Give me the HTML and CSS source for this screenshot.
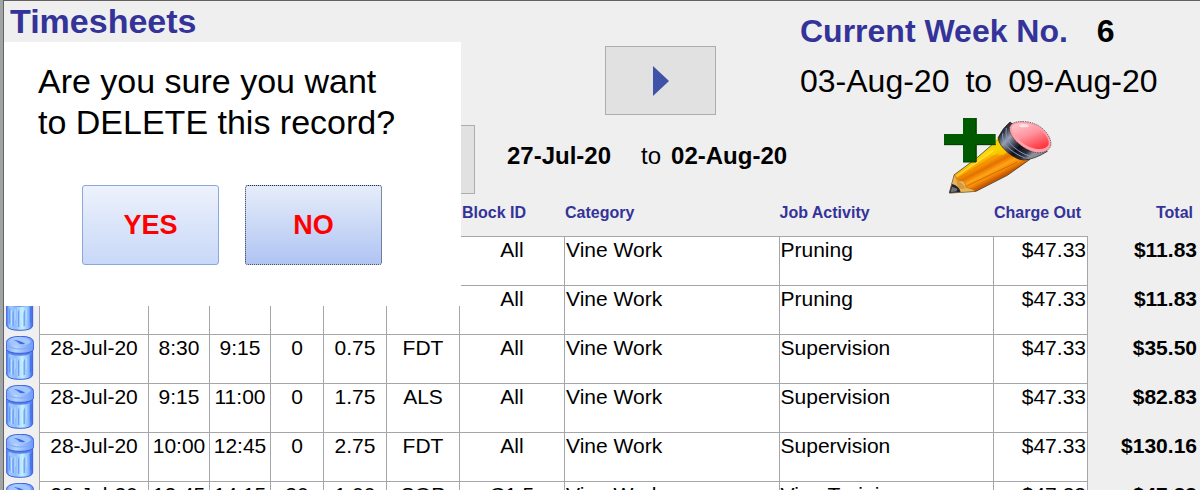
FILE: index.html
```
<!DOCTYPE html>
<html lang="en">
<head>
<meta charset="utf-8">
<title>Timesheets</title>
<link rel="stylesheet" href="styles.css">
</head>
<body>
<svg class="defs" aria-hidden="true">
  <defs>
    <linearGradient id="can" x1="0" x2="1" y1="0" y2="0">
      <stop offset="0" stop-color="#4f86f0"/><stop offset=".12" stop-color="#9cc8ff"/><stop offset=".35" stop-color="#90bcfc"/><stop offset=".6" stop-color="#c4f0ff"/><stop offset=".82" stop-color="#8fc0ff"/><stop offset="1" stop-color="#3a62e8"/>
    </linearGradient>
    <linearGradient id="lid" x1="0" x2="1" y1="0" y2="0">
      <stop offset="0" stop-color="#7fa6fa"/><stop offset=".35" stop-color="#b8d6ff"/><stop offset="1" stop-color="#6b96f8"/>
    </linearGradient>
    <linearGradient id="flute" x1="0" x2="1" y1="0" y2="0">
      <stop offset="0" stop-color="#5a86ee"/><stop offset=".5" stop-color="#8ab4fa"/><stop offset="1" stop-color="#d2f6ff"/>
    </linearGradient>
    <linearGradient id="wood" gradientUnits="userSpaceOnUse" x1="150" y1="150" x2="196" y2="238">
      <stop offset="0" stop-color="#e8c800"/><stop offset=".18" stop-color="#ffdc00"/><stop offset=".36" stop-color="#ffa800"/><stop offset=".56" stop-color="#e47000"/><stop offset=".72" stop-color="#ffa414"/><stop offset=".86" stop-color="#f48a08"/><stop offset="1" stop-color="#c85800"/>
    </linearGradient>
    <linearGradient id="metal" gradientUnits="userSpaceOnUse" x1="222" y1="95" x2="300" y2="170">
      <stop offset="0" stop-color="#30343c"/><stop offset=".22" stop-color="#9aa0b0"/><stop offset=".42" stop-color="#4a4e5c"/><stop offset=".6" stop-color="#101218"/><stop offset=".85" stop-color="#2c2e36"/><stop offset="1" stop-color="#8c8e98"/>
    </linearGradient>
    <linearGradient id="rubber" x1=".2" x2=".8" y1="0" y2="1">
      <stop offset="0" stop-color="#ffc4cc"/><stop offset=".45" stop-color="#ff929c"/><stop offset="1" stop-color="#ff3038"/>
    </linearGradient>
    <symbol id="bin" viewBox="18 138 84 132">
      <path d="M20 180V254Q24 268 60 268T98 254V180Z" fill="url(#can)" stroke="#3c62e0" stroke-width="3"/>
      <path d="M27 202Q33 205 35 210V255Q29 252 27 244Z" fill="url(#flute)"/>
      <path d="M38 254V217Q40 206 46 205V234Q43 242 43 256Z" fill="url(#flute)"/>
      <path d="M54 258V216Q55 206 61 205V238Q59 248 59 258Z" fill="url(#flute)"/>
      <path d="M71 256V216Q72 206 79 204V234Q77 244 77 254Z" fill="url(#flute)"/>
      <path d="M90 198V248L95 242V194Z" fill="#4a74ea"/>
      <path d="M22 190Q60 205 97 190V184H22Z" fill="#5880ea"/>
      <path d="M19 158Q20 140 60 139T101 158V178Q94 190 60 190T19 178Z" fill="url(#lid)" stroke="#3c62e0" stroke-width="3"/>
      <path d="M21 164Q35 178 62 177T99 163" fill="none" stroke="#7ea8fa" stroke-width="3"/>
      <path d="M26 156Q35 144 60 143T93 155Q82 167 60 167T26 156Z" fill="#a2c6ff"/>
      <path d="M41 151Q57 149 76 162Q59 164 55 158Q50 154 41 151Z" fill="#446ce0"/>
    </symbol>
  </defs>
</svg>

<main class="app">
  <header class="top">
    <h1 class="title">Timesheets</h1>

    <nav class="weeks" aria-label="Week">
      <button class="step next" type="button" aria-label="Next week">
        <svg class="arrow" viewBox="0 0 16 30" aria-hidden="true"><path d="M0 0V30L16 15Z" fill="#4052a8"/></svg>
      </button>
      <button class="step previous" type="button" aria-label="Previous week"></button>
      <p class="range"><b>27-Jul-20</b><span class="to">to</span><b>02-Aug-20</b></p>
    </nav>

    <section class="current">
      <h2 class="week">Current Week No. <span class="number">6</span></h2>
      <p class="dates"><span>03-Aug-20</span><span>to</span><span>09-Aug-20</span></p>
      <button class="add" type="button" aria-label="Add record">
        <svg class="pencil" viewBox="42 54 324 228" aria-hidden="true">
          <path d="M73 224L138 176L214 110L300 178L232 226L138 274L58 279Z" fill="url(#wood)" stroke="#222" stroke-width="2"/>
          <path d="M204 112L214 106L240 150L220 164L184 166Q176 152 204 112Z" fill="#f6d000" opacity=".75"/>
          <path d="M84 236L206 160" stroke="#c87800" stroke-width="2" opacity=".6"/>
          <path d="M110 258L262 186" stroke="#b85400" stroke-width="3" opacity=".6"/>
          <path d="M80 229L190 152" stroke="#fff060" stroke-width="4" opacity=".6"/>
          <path d="M73 224Q82 246 92 242Q106 240 108 262Q126 266 138 274L58 279Z" fill="#e8b458" stroke="#7a5010" stroke-width="1"/>
          <path d="M78 240Q98 246 106 266L86 266Z" fill="#d8983c"/>
          <path d="M66 252Q86 256 92 276L58 279Z" fill="#22242c"/>
          <path d="M66 260L82 266L80 274L62 277Z" fill="#70727c"/>
          <path d="M240 66Q218 84 205 112Q204 132 232 156T282 180Q314 178 352 154Z" fill="url(#metal)" stroke="#111" stroke-width="2"/>
          <path d="M229 84Q222 118 252 142T300 167M218 100Q214 128 240 148T284 173" fill="none" stroke="#8294c8" stroke-width="3"/>
          <path d="M240 78Q250 62 286 65T346 94Q366 118 362 138Q352 160 322 158T258 124Q234 98 240 78Z" fill="#ff9fac" stroke="#222" stroke-width="2" stroke-dasharray="4 3"/>
          <path d="M246 80Q256 66 288 70T342 98Q360 120 355 136Q346 150 316 146T262 114Q242 94 246 80Z" fill="url(#rubber)"/>
          <ellipse cx="282" cy="77" rx="14" ry="5" fill="#fff" opacity=".6"/>
          <path d="M99 54H140V102H197V135H140V186H99V135H42V102H99Z" fill="#005a00"/>
          <path d="M138 54V102M138 135V186H99M197 134H140M42 134H99" fill="none" stroke="#003c00" stroke-width="3"/>
        </svg>
      </button>
    </section>
  </header>

  <table class="records">
    <colgroup>
      <col class="c-bin"><col class="c-date"><col class="c-time"><col class="c-time"><col class="c-break"><col class="c-hours"><col class="c-staff"><col class="c-block"><col><col><col class="c-rate"><col class="c-total">
    </colgroup>
    <thead>
      <tr><td colspan="7"></td><th class="block" scope="col">Block ID</th><th scope="col">Category</th><th scope="col">Job Activity</th><th scope="col">Charge Out</th><th class="sum" scope="col">Total</th></tr>
    </thead>
    <tbody>
      <tr><td class="tool"><button class="delete" type="button" aria-label="Delete record"><svg class="bin" aria-hidden="true"><use href="#bin"/></svg></button></td><td></td><td></td><td></td><td></td><td></td><td></td><td>All</td><td class="text">Vine Work</td><td class="text">Pruning</td><td class="rate">$47.33</td><td class="total">$11.83</td></tr>
      <tr><td class="tool"><button class="delete" type="button" aria-label="Delete record"><svg class="bin" aria-hidden="true"><use href="#bin"/></svg></button></td><td></td><td></td><td></td><td></td><td></td><td></td><td>All</td><td class="text">Vine Work</td><td class="text">Pruning</td><td class="rate">$47.33</td><td class="total">$11.83</td></tr>
      <tr><td class="tool"><button class="delete" type="button" aria-label="Delete record"><svg class="bin" aria-hidden="true"><use href="#bin"/></svg></button></td><td>28-Jul-20</td><td>8:30</td><td>9:15</td><td>0</td><td>0.75</td><td>FDT</td><td>All</td><td class="text">Vine Work</td><td class="text">Supervision</td><td class="rate">$47.33</td><td class="total">$35.50</td></tr>
      <tr><td class="tool"><button class="delete" type="button" aria-label="Delete record"><svg class="bin" aria-hidden="true"><use href="#bin"/></svg></button></td><td>28-Jul-20</td><td>9:15</td><td>11:00</td><td>0</td><td>1.75</td><td>ALS</td><td>All</td><td class="text">Vine Work</td><td class="text">Supervision</td><td class="rate">$47.33</td><td class="total">$82.83</td></tr>
      <tr><td class="tool"><button class="delete" type="button" aria-label="Delete record"><svg class="bin" aria-hidden="true"><use href="#bin"/></svg></button></td><td>28-Jul-20</td><td>10:00</td><td>12:45</td><td>0</td><td>2.75</td><td>FDT</td><td>All</td><td class="text">Vine Work</td><td class="text">Supervision</td><td class="rate">$47.33</td><td class="total">$130.16</td></tr>
      <tr><td class="tool"><button class="delete" type="button" aria-label="Delete record"><svg class="bin" aria-hidden="true"><use href="#bin"/></svg></button></td><td>28-Jul-20</td><td>12:45</td><td>14:15</td><td>30</td><td>1.00</td><td>SOP</td><td>C1.5</td><td class="text">Vine Work</td><td class="text">Vine Training</td><td class="rate">$47.33</td><td class="total">$47.33</td></tr>
    </tbody>
  </table>

  <div class="dialog" role="alertdialog" aria-labelledby="question">
    <p class="question" id="question">Are you sure you want<br>to DELETE this record?</p>
    <div class="answers">
      <button class="answer" type="button">YES</button>
      <button class="answer chosen" type="button">NO</button>
    </div>
  </div>
</main>
</body>
</html>
```

FILE: styles.css
```
* { box-sizing: border-box; }

body {
  margin: 0;
  background: #efefef;
  color: #000;
  font-family: "Liberation Sans", Arial, sans-serif;
}

h1, h2, p { margin: 0; }
button { padding: 0; font: inherit; }
svg { display: block; }
.defs { position: absolute; width: 0; height: 0; }

.app {
  position: relative;
  height: 100vh;
  overflow: hidden;
  border-top: 1px solid #646060;
  border-left: 4px solid #646464;
}

/* Outer window edge, lighter than the inner line */
.app::before {
  content: "";
  position: fixed;
  top: 0;
  bottom: 0;
  left: 0;
  width: 3px;
  background: #a0a4a4;
}

.top {
  display: grid;
  grid-template-columns: 360px 436px 1fr;
  height: 195px;
}

.title {
  padding-left: 6px;
  color: #333399;
  font-size: 34px;
  line-height: 40px;
}

.weeks {
  display: grid;
  grid-template-columns: 111px 130px 1fr;
  grid-template-rows: 69px 69px;
  row-gap: 10px;
  padding-top: 45px;
}

.step {
  display: grid;
  place-items: center;
  width: 111px;
  border: 1px solid #adadad;
  border-radius: 0;
  background: #e1e1e1;
}

.next { grid-column: 3; }
.previous { grid-column: 1; }
.arrow { width: 16px; height: 30px; }

.range {
  grid-column: 2 / 4;
  display: flex;
  align-items: baseline;
  padding: 17px 0 0 32px;
  font-size: 24px;
  line-height: 28px;
}

.to { margin: 0 10px 0 30px; }

.current { padding-top: 10px; }

.week {
  color: #333399;
  font-size: 32px;
  line-height: 40px;
}

.number { margin-left: 20px; color: #000; }

.dates {
  display: flex;
  gap: 16px;
  margin-top: 10px;
  font-size: 32px;
  line-height: 40px;
}

.add {
  margin: 17px 0 0 144px;
  border: 0;
  background: none;
}

.pencil { width: 108px; height: 76px; }

.records {
  width: 100%;
  table-layout: fixed;
  border-spacing: 0;
}

.c-bin { width: 35px; }
.c-date { width: 109px; }
.c-time { width: 61px; }
.c-break { width: 53px; }
.c-hours { width: 63px; }
.c-staff { width: 73px; }
.c-block { width: 105px; }
.c-rate { width: 95px; }
.c-total { width: 112px; }

.records th {
  height: 40px;
  padding: 7px 0 0 1px;
  color: #333399;
  font-size: 16px;
  line-height: 20px;
  text-align: left;
  vertical-align: top;
}

.records .block { padding-left: 3px; }
.records .sum { padding-right: 7px; text-align: right; }

.records tbody td {
  height: 49px;
  padding: 1px 0 0;
  border-top: 1px solid #a6a6aa;
  border-left: 1px solid #a6a6aa;
  background: #fff;
  font-size: 21px;
  line-height: 24px;
  text-align: center;
  vertical-align: top;
  white-space: nowrap;
}

.records tbody .text { padding-left: 1px; text-align: left; }
.records tbody .rate { padding-right: 1px; border-right: 1px solid #a6a6aa; text-align: right; }

.records tbody .total {
  padding-right: 3px;
  border-color: transparent;
  border-left: 0;
  background: none;
  font-weight: bold;
  text-align: right;
}

.records tbody .tool {
  padding: 1px 0 0 2px;
  border-color: transparent;
  border-left: 0;
  background: none;
}

.delete {
  display: block;
  border: 0;
  background: none;
}

.bin { width: 28px; height: 44px; }

.dialog {
  position: absolute;
  top: 41px;
  left: 0;
  width: 457px;
  height: 264px;
  padding: 19px 34px;
  background: #fff;
}

.question {
  font-size: 34px;
  line-height: 41px;
  white-space: nowrap;
}

.answers {
  display: flex;
  gap: 26px;
  margin: 42px 0 0 44px;
}

.answer {
  width: 137px;
  height: 80px;
  border: 1px solid #8aa8dc;
  border-radius: 3px;
  background: linear-gradient(#edf2fc, #c8d8f8);
  color: #ff0000;
  font-size: 27px;
  font-weight: bold;
}

.chosen {
  border: 1px dotted #203050;
  background: linear-gradient(#e6edfa, #b0c4f3);
}
```
